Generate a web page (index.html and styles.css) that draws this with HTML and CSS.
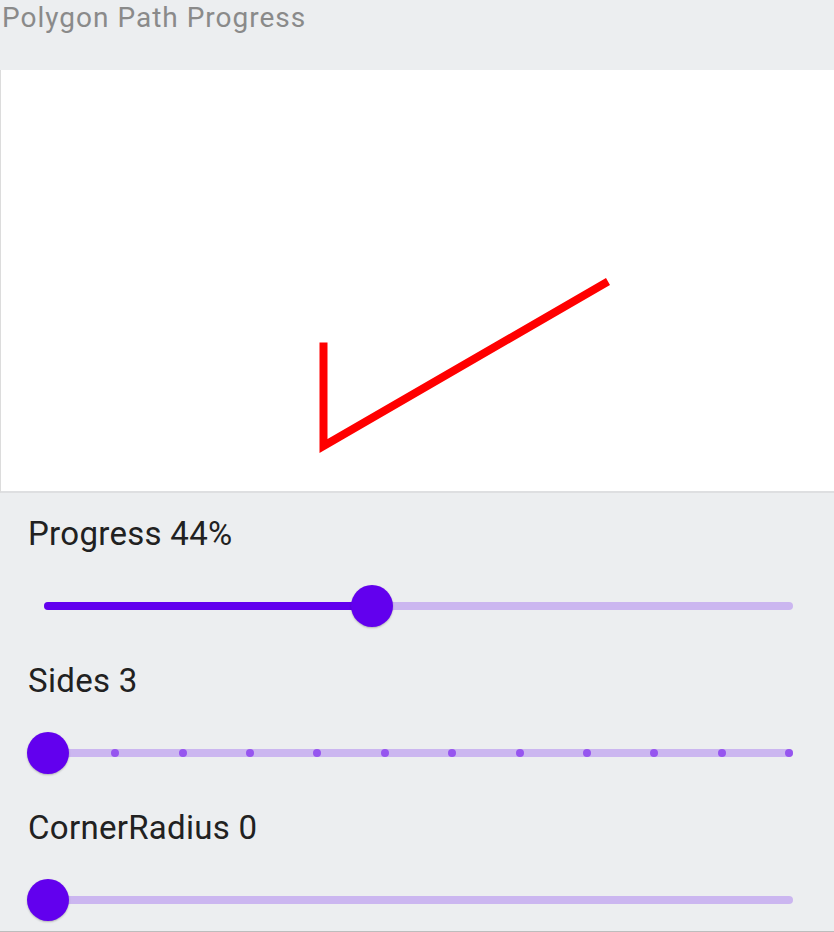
FILE: index.html
```html
<!DOCTYPE html>
<html>
<head>
<meta charset="utf-8">
<link rel="stylesheet" href="styles.css">
</head>
<body>
<div class="page">
  <header class="title-bar">Polygon Path Progress</header>
  <section class="canvas">
    <svg class="shape" width="834" height="421" viewBox="0 0 834 421">
      <polyline points="323.5,272.5 323.5,376 608,211.5" fill="none" stroke="#ff0000" stroke-width="8" stroke-linejoin="miter" stroke-linecap="butt"/>
    </svg>
  </section>
  <section class="controls">
    <div class="control">
      <div class="label">Progress 44%</div>
      <div class="slider">
        <div class="track"></div>
        <div class="track-active" style="width: 328px"></div>
        <div class="thumb" style="left: 328px"></div>
      </div>
    </div>
    <div class="control">
      <div class="label">Sides 3</div>
      <div class="slider">
        <div class="track"></div>
        <div class="ticks">
          <span class="tick"></span><span class="tick"></span><span class="tick"></span><span class="tick"></span><span class="tick"></span><span class="tick"></span><span class="tick"></span><span class="tick"></span><span class="tick"></span><span class="tick"></span><span class="tick"></span><span class="tick"></span>
        </div>
        <div class="thumb" style="left: 4px"></div>
      </div>
    </div>
    <div class="control">
      <div class="label">CornerRadius 0</div>
      <div class="slider">
        <div class="track"></div>
        <div class="thumb" style="left: 4px"></div>
      </div>
    </div>
  </section>
</div>
</body>
</html>
```
FILE: styles.css
```css
* { box-sizing: border-box; }
html, body {
  margin: 0;
  padding: 0;
}
body {
  background: #eceef0;
  font-family: Roboto, "Noto Sans", sans-serif;
  width: 834px;
  height: 932px;
  overflow: hidden;
}
.page {
  height: 932px;
  border-bottom: 1px solid #bdbdbd;
  display: flex;
  flex-direction: column;
  overflow: hidden;
}
.title-bar {
  flex-shrink: 0;
  height: 70px;
  padding-left: 2px;
  font-size: 28px;
  line-height: 36px;
  color: #8a8a8a;
  letter-spacing: 1px;
}
.canvas {
  flex-shrink: 0;
  height: 423px;
  background: #ffffff;
  border-left: 1px solid #dcdcdc;
  border-bottom: 2px solid #dedfe1;
}
.shape {
  display: block;
  margin-left: -1px;
}
.controls {
  flex-shrink: 0;
  padding-top: 21px;
  display: flex;
  flex-direction: column;
}
.control {
  flex-shrink: 0;
  height: 147px;
  display: flex;
  flex-direction: column;
}
.label {
  padding-left: 28px;
  font-size: 33px;
  line-height: 40px;
  color: #212121;
  letter-spacing: 0.3px;
}
.slider {
  position: relative;
  margin-top: 28px;
  margin-left: 44px;
  width: 749px;
  height: 48px;
}
.track {
  position: absolute;
  left: 0;
  right: 0;
  top: 20px;
  height: 8px;
  border-radius: 4px;
  background: #cbb6f0;
}
.track-active {
  position: absolute;
  left: 0;
  top: 20px;
  height: 8px;
  border-radius: 4px;
  background: #6200ee;
}
.ticks {
  position: absolute;
  left: 0;
  right: 0;
  top: 20px;
  height: 8px;
  display: flex;
  justify-content: space-between;
}
.tick {
  width: 8px;
  height: 8px;
  border-radius: 50%;
  background: #9655ef;
}
.thumb {
  position: absolute;
  top: 3px;
  width: 42px;
  height: 42px;
  margin-left: -21px;
  border-radius: 50%;
  background: #6200ee;
  box-shadow: 0 1px 2px rgba(0, 0, 0, 0.25);
}
```
